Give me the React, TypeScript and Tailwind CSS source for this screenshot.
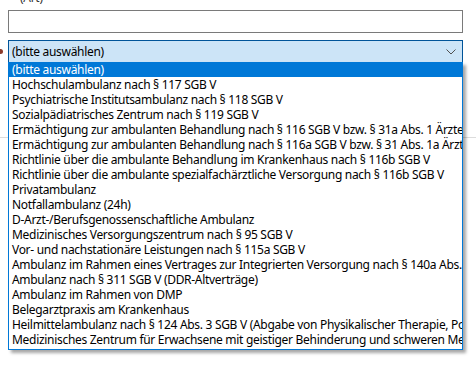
import React from "react";

const items = [
  "(bitte auswählen)",
  "Hochschulambulanz nach § 117 SGB V",
  "Psychiatrische Institutsambulanz nach § 118 SGB V",
  "Sozialpädiatrisches Zentrum nach § 119 SGB V",
  "Ermächtigung zur ambulanten Behandlung nach § 116 SGB V bzw. § 31a Abs. 1 Ärzte-ZV",
  "Ermächtigung zur ambulanten Behandlung nach § 116a SGB V bzw. § 31 Abs. 1a Ärzte-ZV",
  "Richtlinie über die ambulante Behandlung im Krankenhaus nach § 116b SGB V",
  "Richtlinie über die ambulante spezialfachärztliche Versorgung nach § 116b SGB V",
  "Privatambulanz",
  "Notfallambulanz (24h)",
  "D-Arzt-/Berufsgenossenschaftliche Ambulanz",
  "Medizinisches Versorgungszentrum nach § 95 SGB V",
  "Vor- und nachstationäre Leistungen nach § 115a SGB V",
  "Ambulanz im Rahmen eines Vertrages zur Integrierten Versorgung nach § 140a Abs. 1 SGB V",
  "Ambulanz nach § 311 SGB V (DDR-Altverträge)",
  "Ambulanz im Rahmen von DMP",
  "Belegarztpraxis am Krankenhaus",
  "Heilmittelambulanz nach § 124 Abs. 3 SGB V (Abgabe von Physikalischer Therapie, Podologischer Therapie)",
  "Medizinisches Zentrum für Erwachsene mit geistiger Behinderung und schweren Mehrfachbehinderungen",
];

export default function App() {
  return (
    <div
      className="relative w-[476px] h-[383px] overflow-hidden bg-white text-[12px] tracking-[-0.3px] text-black"
      style={{ fontFamily: '"Noto Sans", "Liberation Sans", sans-serif' }}
    >
      <div className="h-[10px] overflow-hidden flex flex-col justify-start pl-[8px]">
        <div className="leading-[15px] text-[#333] -translate-y-[10px]">-&nbsp;&nbsp;&nbsp;(Art)</div>
      </div>
      <div className="ml-[8px] w-[455px] h-[23px] border border-[#7a7a7a] bg-white" />
      <div className="mt-[7px] flex items-center">
        <span className="w-[3px] h-[5px] rounded-r-full bg-[#8b3a2a] mr-[5px]" />
        <div className="w-[455px] h-[23px] border border-[#005499] bg-[#cce4f7] flex items-center justify-between pl-[3px] pr-[5px]">
          <span className="leading-[15px]">(bitte auswählen)</span>
          <svg width="10" height="6" viewBox="0 0 10 6" className="mr-[1px]">
            <path d="M0.5 0.5 L5 5 L9.5 0.5" fill="none" stroke="#505050" strokeWidth="1" />
          </svg>
        </div>
      </div>
      <div className="mt-[74px] h-px bg-[#dcdcdc]" />

      <div className="absolute left-[8px] top-[62px] w-[455px] flex flex-col border border-[#0078d7] border-t-0 bg-white shadow-[3px_3px_3px_rgba(0,0,0,0.35)] pb-[2px]">
        {items.map((t, i) => (
          <div
            key={i}
            className={
              "h-[15px] leading-[15px] pl-[3px] whitespace-nowrap overflow-hidden " +
              (i === 0 ? "bg-[#0078d7] text-white" : "")
            }
          >
            {t}
          </div>
        ))}
      </div>
    </div>
  );
}
